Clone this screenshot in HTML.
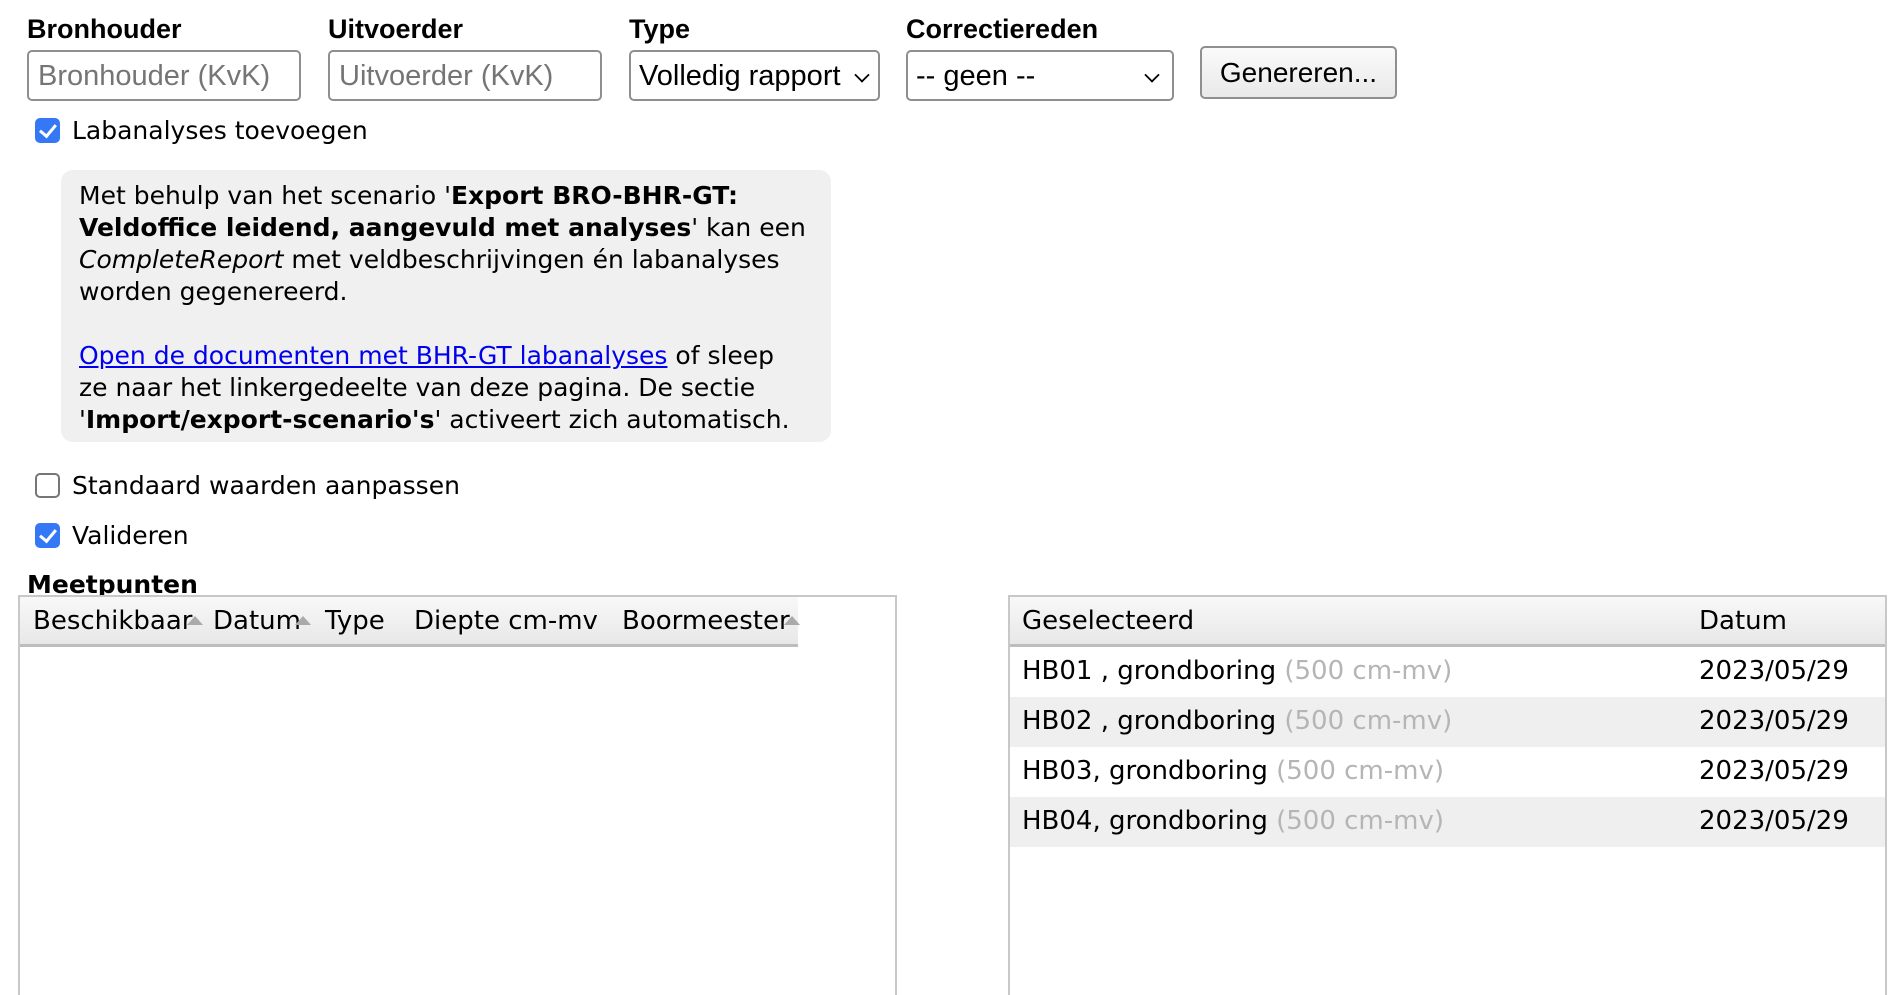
<!DOCTYPE html>
<html><head><meta charset="utf-8"><style>
*{box-sizing:border-box;margin:0;padding:0}
body{width:1904px;height:990px;overflow:hidden;background:#fff;position:relative;font-family:"DejaVu Sans","Liberation Sans",sans-serif;color:#000}
.a{position:absolute}
.lbl{font-family:"Liberation Sans",Arial,sans-serif;font-weight:bold;font-size:27px;top:14px;white-space:nowrap}
.inp{top:50px;height:51px;border:2px solid #8f8f8f;border-radius:5px;font-family:"Liberation Sans",Arial,sans-serif;font-size:29px;padding:8px 0 0 9px;white-space:nowrap;background:#fff}
.ph{color:#757575}
.chev{position:absolute;right:10px;top:17px;width:12px;height:12px;border-right:2px solid #000;border-bottom:2px solid #000;transform:rotate(45deg) scale(.9)}
.cb{width:25px;height:25px;border-radius:5px}
.on{background:#3478f6}
.on::after{content:"";position:absolute;left:8px;top:3px;width:7px;height:13px;border-right:3px solid #fff;border-bottom:3px solid #fff;transform:rotate(40deg)}
.off{border:2px solid #767676;background:#fff}
.ct{font-size:25px;white-space:nowrap}
.info{left:61px;top:170px;width:770px;height:272px;background:#f0f0f0;border-radius:12px;padding:10px 18px;font-size:25px;line-height:32px;white-space:nowrap}
.info a{color:#0000ee}
.tbl{top:595px;height:400px;border:2px solid #c8c8c8;border-bottom:none}
.hd{position:absolute;left:0;top:0;height:50px;background:linear-gradient(#f8f8f8,#e8e8e8);border-bottom:3px solid #bdbdbd;font-size:26px}
.hd span{position:absolute;top:9px;white-space:nowrap}
.tri{display:inline-block;width:0;height:0;border-left:8px solid transparent;border-right:8px solid transparent;border-bottom:9px solid #aaa;margin-left:-6px;vertical-align:4px}
.row{position:absolute;left:0;right:0;height:50px;font-size:26px}
.row span{position:absolute;top:9px;white-space:nowrap}
.g{color:#b5b5b5}
</style></head><body>
<div class="a lbl" style="left:27px">Bronhouder</div>
<div class="a lbl" style="left:328px">Uitvoerder</div>
<div class="a lbl" style="left:629px">Type</div>
<div class="a lbl" style="left:906px">Correctiereden</div>
<div class="a inp" style="left:27px;width:274px"><span class="ph">Bronhouder (KvK)</span></div>
<div class="a inp" style="left:328px;width:274px"><span class="ph">Uitvoerder (KvK)</span></div>
<div class="a inp" style="left:629px;width:251px;padding-left:8px">Volledig rapport<i class="chev"></i></div>
<div class="a inp" style="left:906px;width:268px;padding-left:8px">-- geen --<i class="chev" style="right:14px"></i></div>
<div class="a" style="left:1200px;top:46px;width:197px;height:53px;border:2px solid #8f8f8f;border-radius:5px;background:linear-gradient(#fafafa,#e9e9e9);font-family:'Liberation Sans',Arial,sans-serif;font-size:28px;text-align:center;line-height:49px">Genereren...</div>

<div class="a cb on" style="left:35px;top:118px"></div>
<div class="a ct" style="left:72px;top:116px">Labanalyses toevoegen</div>

<div class="a info">Met behulp van het scenario '<b>Export BRO-BHR-GT:</b><br><b>Veldoffice leidend, aangevuld met analyses</b>' kan een<br><i>CompleteReport</i> met veldbeschrijvingen én labanalyses<br>worden gegenereerd.<br><br><a href="#">Open de documenten met BHR-GT labanalyses</a> of sleep<br>ze naar het linkergedeelte van deze pagina. De sectie<br>'<b>Import/export-scenario's</b>' activeert zich automatisch.</div>

<div class="a cb off" style="left:35px;top:473px"></div>
<div class="a ct" style="left:72px;top:471px">Standaard waarden aanpassen</div>
<div class="a cb on" style="left:35px;top:523px"></div>
<div class="a ct" style="left:72px;top:521px">Valideren</div>

<div class="a" style="left:27px;top:570px;font-size:25px;font-weight:bold">Meetpunten</div>

<div class="a tbl" style="left:18px;width:879px">
 <div class="hd" style="width:778px">
  <span style="left:13px">Beschikbaar<i class="tri"></i></span>
  <span style="left:193px">Datum<i class="tri"></i></span>
  <span style="left:305px">Type</span>
  <span style="left:394px">Diepte cm-mv</span>
  <span style="left:602px">Boormeester<i class="tri"></i></span>
 </div>
</div>

<div class="a tbl" style="left:1008px;width:879px">
 <div class="hd" style="width:100%">
  <span style="left:12px">Geselecteerd</span>
  <span style="left:689px">Datum</span>
 </div>
 <div class="row" style="top:50px"><span style="left:12px">HB01 , grondboring <span class="g" style="position:static">(500 cm-mv)</span></span><span style="left:689px">2023/05/29</span></div>
 <div class="row" style="top:100px;background:#efefef"><span style="left:12px">HB02 , grondboring <span class="g" style="position:static">(500 cm-mv)</span></span><span style="left:689px">2023/05/29</span></div>
 <div class="row" style="top:150px"><span style="left:12px">HB03, grondboring <span class="g" style="position:static">(500 cm-mv)</span></span><span style="left:689px">2023/05/29</span></div>
 <div class="row" style="top:200px;background:#efefef"><span style="left:12px">HB04, grondboring <span class="g" style="position:static">(500 cm-mv)</span></span><span style="left:689px">2023/05/29</span></div>
</div>
</body></html>
